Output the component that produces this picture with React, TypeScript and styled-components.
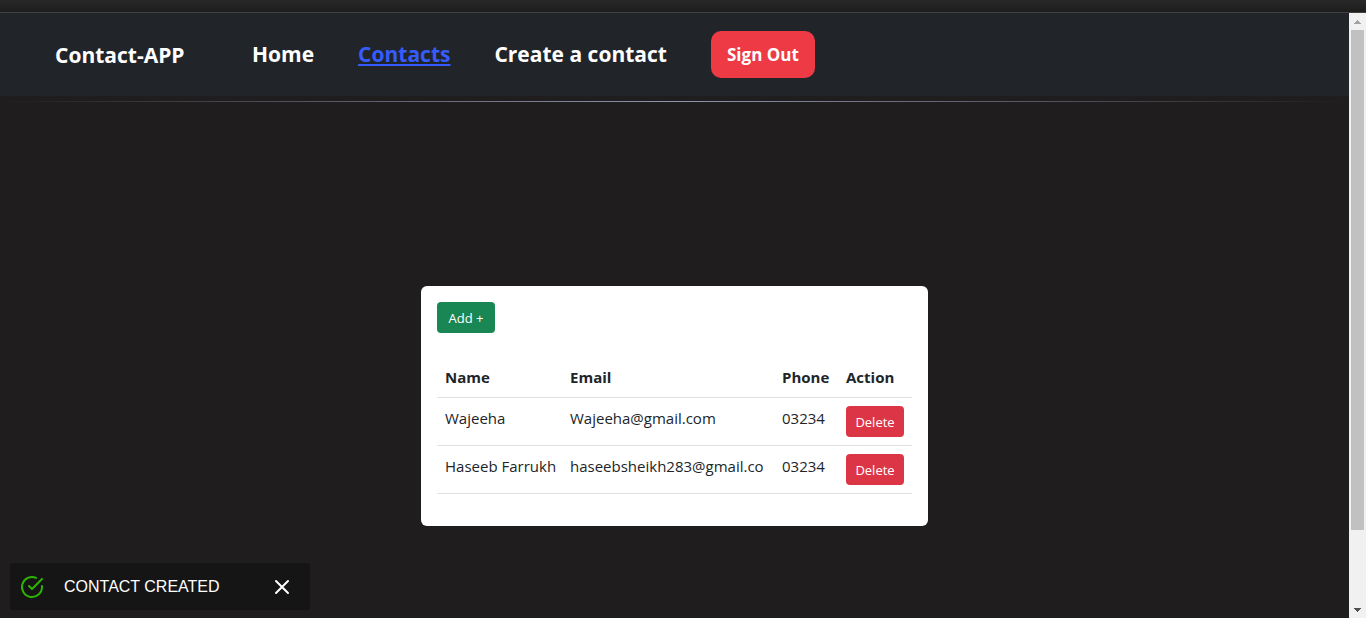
import React from "react";
import styled, { createGlobalStyle, css } from "styled-components";

const GlobalStyle = createGlobalStyle`
  *, *::before, *::after { box-sizing: border-box; }
  body {
    margin: 0;
    background: #201d1e;
    color: #212529;
    font-family: "Segoe UI", "Open Sans", "Noto Sans", sans-serif;
    font-size: 15px;
    line-height: 24px;
  }
  button { font-family: inherit; cursor: pointer; }
`;

const Shell = styled.div`
  display: flex;
  flex-direction: column;
  height: 100vh;
`;

const TopStrip = styled.div`
  flex: none;
  height: 13px;
  background: linear-gradient(#282828, #1d1d1d);
  border-bottom: 1px solid #414141;
`;

const Frame = styled.div`
  display: flex;
  flex: 1;
  min-height: 0;
`;

const Scroller = styled.div`
  flex: 1;
  min-width: 0;
  overflow-y: auto;
  scrollbar-width: none;
`;

const Navbar = styled.nav`
  display: flex;
  align-items: center;
  padding: 18px 55px;
  background: #212529;
`;

const navText = css`
  font-size: 21px;
  font-weight: 700;
  line-height: 32px;
  white-space: nowrap;
`;

const Brand = styled.a`
  ${navText}
  width: 197px;
  color: #fff;
  text-decoration: none;
`;

const Links = styled.div`
  display: flex;
  align-items: center;
  gap: 44px;
`;

const NavLink = styled.a<{ $active?: boolean }>`
  ${navText}
  padding-bottom: 2px;
  color: ${(p) => (p.$active ? "#365cff" : "#fff")};
  text-decoration: ${(p) => (p.$active ? "underline" : "none")};
`;

const SignOut = styled.button`
  min-width: 104px;
  height: 47px;
  padding: 0;
  border: 0;
  border-radius: 10px;
  background: #ed3a45;
  color: #fff;
  font-size: 17px;
  font-weight: 700;
  white-space: nowrap;
`;

const Divider = styled.hr`
  height: 1px;
  margin: 5px 0;
  border: 0;
  background: linear-gradient(90deg, transparent, #8f95ac, transparent);
`;

const Main = styled.main`
  display: flex;
  align-items: center;
  justify-content: center;
  min-height: calc(100vh - 20px);
`;

const Card = styled.section`
  padding: 16px;
  border-radius: 6px;
  background: #fff;
`;

const SmallButton = styled.button<{ $tone: "success" | "danger" }>`
  display: block;
  min-width: 58px;
  height: 31px;
  padding: 0 8px;
  border: 0;
  border-radius: 4px;
  background: ${(p) => (p.$tone === "success" ? "#198754" : "#dc3545")};
  color: #fff;
  font-size: 13px;
  line-height: 20px;
`;

const Table = styled.table`
  width: 475px;
  margin: 24px 0 16px;
  border-collapse: collapse;
  table-layout: fixed;

  th, td {
    padding: 8px;
    border-bottom: 1px solid #dee2e6;
    text-align: left;
    vertical-align: top;
    white-space: nowrap;
  }
`;

const Column = styled.col<{ $width: number }>`
  width: ${(p) => p.$width}px;
`;

const Toast = styled.div`
  position: fixed;
  left: 10px;
  bottom: 8px;
  display: flex;
  align-items: center;
  width: 300px;
  height: 47px;
  padding: 0 16px 0 10px;
  border-radius: 3px;
  background: #151515;
  color: #fff;
  font-family: Arial, "Liberation Sans", sans-serif;
  font-size: 16px;
`;

const ToastText = styled.span`
  flex: 1;
  margin-left: 20px;
`;

const CloseButton = styled.button`
  display: flex;
  padding: 0;
  border: 0;
  background: none;
  color: #fff;
`;

const Track = styled.div`
  display: flex;
  flex: none;
  flex-direction: column;
  width: 17px;
  padding: 0 2px;
  background: #f1f1f1;
`;

const ArrowSlot = styled.div`
  display: flex;
  align-items: center;
  justify-content: center;
  height: 17px;
`;

const ThumbArea = styled.div`
  flex: 1;
`;

const Thumb = styled.div`
  width: 13px;
  height: 87.5%;
  background: #c1c1c1;
`;

const contacts = [
  { name: "Wajeeha", email: "Wajeeha@gmail.com", phone: "03234" },
  { name: "Haseeb Farrukh", email: "haseebsheikh283@gmail.co", phone: "03234" },
];

export default function App() {
  return (
    <>
      <GlobalStyle />
      <Shell>
        <TopStrip />
        <Frame>
          <Scroller>
            <Navbar>
              <Brand href="#">Contact-APP</Brand>
              <Links>
                <NavLink href="#home">Home</NavLink>
                <NavLink href="#contacts" $active>Contacts</NavLink>
                <NavLink href="#create">Create a contact</NavLink>
                <SignOut type="button">Sign Out</SignOut>
              </Links>
            </Navbar>
            <Divider />
            <Main>
              <Card>
                <SmallButton type="button" $tone="success">Add +</SmallButton>
                <Table>
                  <colgroup>
                    <Column $width={125} />
                    <Column $width={212} />
                    <Column $width={64} />
                    <Column $width={74} />
                  </colgroup>
                  <thead>
                    <tr>
                      <th scope="col">Name</th>
                      <th scope="col">Email</th>
                      <th scope="col">Phone</th>
                      <th scope="col">Action</th>
                    </tr>
                  </thead>
                  <tbody>
                    {contacts.map((c) => (
                      <tr key={c.name}>
                        <td>{c.name}</td>
                        <td>{c.email}</td>
                        <td>{c.phone}</td>
                        <td>
                          <SmallButton type="button" $tone="danger">Delete</SmallButton>
                        </td>
                      </tr>
                    ))}
                  </tbody>
                </Table>
              </Card>
            </Main>
          </Scroller>
          <Track aria-hidden="true">
            <ArrowSlot>
              <svg width="7" height="4" viewBox="0 0 7 4" fill="#a3a3a3" shapeRendering="crispEdges">
                <path d="M3 0h1v1h1v1h1v1h1v1H0V3h1V2h1V1h1z" />
              </svg>
            </ArrowSlot>
            <ThumbArea>
              <Thumb />
            </ThumbArea>
            <ArrowSlot>
              <svg width="7" height="4" viewBox="0 0 7 4" fill="#505050" shapeRendering="crispEdges">
                <path d="M0 0h7v1H6v1H5v1H4v1H3V3H2V2H1V1H0z" />
              </svg>
            </ArrowSlot>
          </Track>
        </Frame>
      </Shell>
      <Toast role="status">
        <svg width="24" height="24" viewBox="0 0 24 24" fill="none" stroke="#2db400" strokeWidth="2" strokeLinecap="round" strokeLinejoin="round">
          <path d="M22 11.08V12a10 10 0 1 1-5.93-9.14" />
          <path d="M22 4 12 14.01l-3-3" />
        </svg>
        <ToastText>CONTACT CREATED</ToastText>
        <CloseButton type="button" aria-label="Close">
          <svg width="24" height="24" viewBox="0 0 24 24" fill="none" stroke="currentColor" strokeWidth="2" strokeLinecap="round">
            <path d="M18 6 6 18M6 6l12 12" />
          </svg>
        </CloseButton>
      </Toast>
    </>
  );
}
